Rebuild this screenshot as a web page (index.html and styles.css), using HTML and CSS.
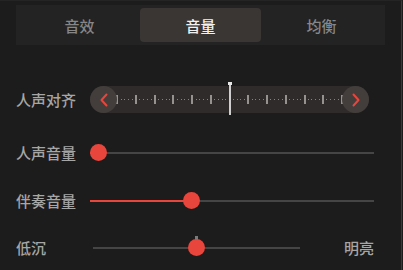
FILE: index.html
```html
<!DOCTYPE html>
<html lang="zh-CN">
<head>
<meta charset="utf-8">
<link rel="stylesheet" href="styles.css">
</head>
<body>
<div class="app">
  <div class="tabs">
    <div class="tab">音效</div>
    <div class="tab active">音量</div>
    <div class="tab">均衡</div>
  </div>
  <div class="rows">
    <div class="row row-align">
      <div class="label">人声对齐</div>
      <div class="pill">
        <div class="btn">
          <svg width="10" height="14" viewBox="0 0 10 14"><path d="M7.5 1.5 L2.5 7 L7.5 12.5" fill="none" stroke="#e8453c" stroke-width="2" stroke-linecap="round" stroke-linejoin="round"/></svg>
        </div>
        <div class="scale">
          <span class="tick"></span><span class="tick"></span><span class="tick"></span><span class="tick"></span><span class="tick"></span><span class="tick"></span><span class="tick center"></span><span class="tick"></span><span class="tick"></span><span class="tick"></span><span class="tick"></span><span class="tick"></span><span class="tick"></span>
        </div>
        <div class="btn">
          <svg width="10" height="14" viewBox="0 0 10 14"><path d="M2.5 1.5 L7.5 7 L2.5 12.5" fill="none" stroke="#e8453c" stroke-width="2" stroke-linecap="round" stroke-linejoin="round"/></svg>
        </div>
      </div>
    </div>
    <div class="row row-vocal">
      <div class="label">人声音量</div>
      <div class="slider">
        <div class="track"></div>
        <div class="fill" style="width: 8.5px"></div>
        <div class="thumb" style="left: 0px"></div>
      </div>
    </div>
    <div class="row">
      <div class="label">伴奏音量</div>
      <div class="slider">
        <div class="track"></div>
        <div class="fill" style="width: 101.5px"></div>
        <div class="thumb" style="left: 93px"></div>
      </div>
    </div>
    <div class="row row-tone">
      <div class="label short">低沉</div>
      <div class="slider tone">
        <div class="track"></div>
        <div class="mid"></div>
        <div class="thumb" style="left: 95px"></div>
      </div>
      <div class="label end">明亮</div>
    </div>
  </div>
</div>
</body>
</html>
```

FILE: styles.css
```css
* { box-sizing: border-box; }
html, body {
  margin: 0;
  padding: 0;
  background: #1c1c1c;
  width: 403px;
  height: 270px;
  overflow: hidden;
  font-family: "Noto Sans CJK SC", "Noto Sans", sans-serif;
}
.app {
  width: 402px;
  height: 270px;
  border-right: 1px solid #3a3a3a;
  border-top: 1px solid #242424;
  padding: 4px 16px 0 16px;
}
.tabs {
  display: grid;
  grid-template-columns: repeat(3, 1fr);
  height: 40px;
  width: 369px;
  padding: 3px;
  background: #242323;
}
.tab {
  display: flex;
  align-items: center;
  justify-content: center;
  font-size: 15px;
  font-weight: 500;
  color: #878787;
  border-radius: 4px;
}
.tab.active {
  background: #3a3634;
  color: #f2f2f2;
}
.rows {
  display: flex;
  flex-direction: column;
  gap: 30px;
  margin-top: 41px;
  width: 358px;
}
.row {
  display: flex;
  align-items: center;
  height: 18px;
}
.row-align {
  height: 27px;
}
.row-vocal { margin-top: 1px; }
.row-tone { margin-top: -1px; }
.label {
  width: 74px;
  flex: none;
  font-size: 15px;
  font-weight: 500;
  color: #a6a6a6;
  line-height: 18px;
}
.label.short { width: 77px; }
.label.end { margin-left: auto; width: auto; }
.pill {
  display: flex;
  align-items: center;
  width: 279px;
  height: 27px;
  border-radius: 14px;
  background: #2e2b2a;
}
.btn {
  width: 27px;
  height: 27px;
  flex: none;
  border-radius: 50%;
  background: #433e3c;
  display: flex;
  align-items: center;
  justify-content: center;
  position: relative;
  z-index: 1;
}
.scale {
  flex: 1;
  height: 27px;
  margin: 0 -1px;
  display: flex;
  align-items: center;
  justify-content: space-between;
  background: repeating-linear-gradient(to right, #85827f 0 1px, transparent 1px 3.74px) left center / 100% 1px no-repeat;
  background-position: 1px 50%;
}
.tick {
  width: 2px;
  height: 9px;
  background: #95928f;
  flex: none;
}
.tick.center {
  height: 33px;
  background: #cfcfcf;
  position: relative;
  margin-top: -3px;
}
.tick.center::before {
  content: "";
  position: absolute;
  left: -1px;
  top: 0;
  width: 4px;
  height: 3px;
  background: #e6e6e6;
}
.slider {
  position: relative;
  width: 284px;
  height: 18px;
  flex: none;
}
.slider.tone {
  width: 207px;
}
.track {
  position: absolute;
  left: 0;
  right: 0;
  top: 8px;
  height: 2px;
  background: #454545;
}
.fill {
  position: absolute;
  left: 0;
  top: 8px;
  height: 2px;
  background: #e8453c;
}
.mid {
  position: absolute;
  left: 102px;
  top: -3px;
  width: 3px;
  height: 6px;
  background: #7a7a7a;
}
.thumb {
  position: absolute;
  top: 0;
  width: 17px;
  height: 17px;
  border-radius: 50%;
  background: #e8453c;
}
```
